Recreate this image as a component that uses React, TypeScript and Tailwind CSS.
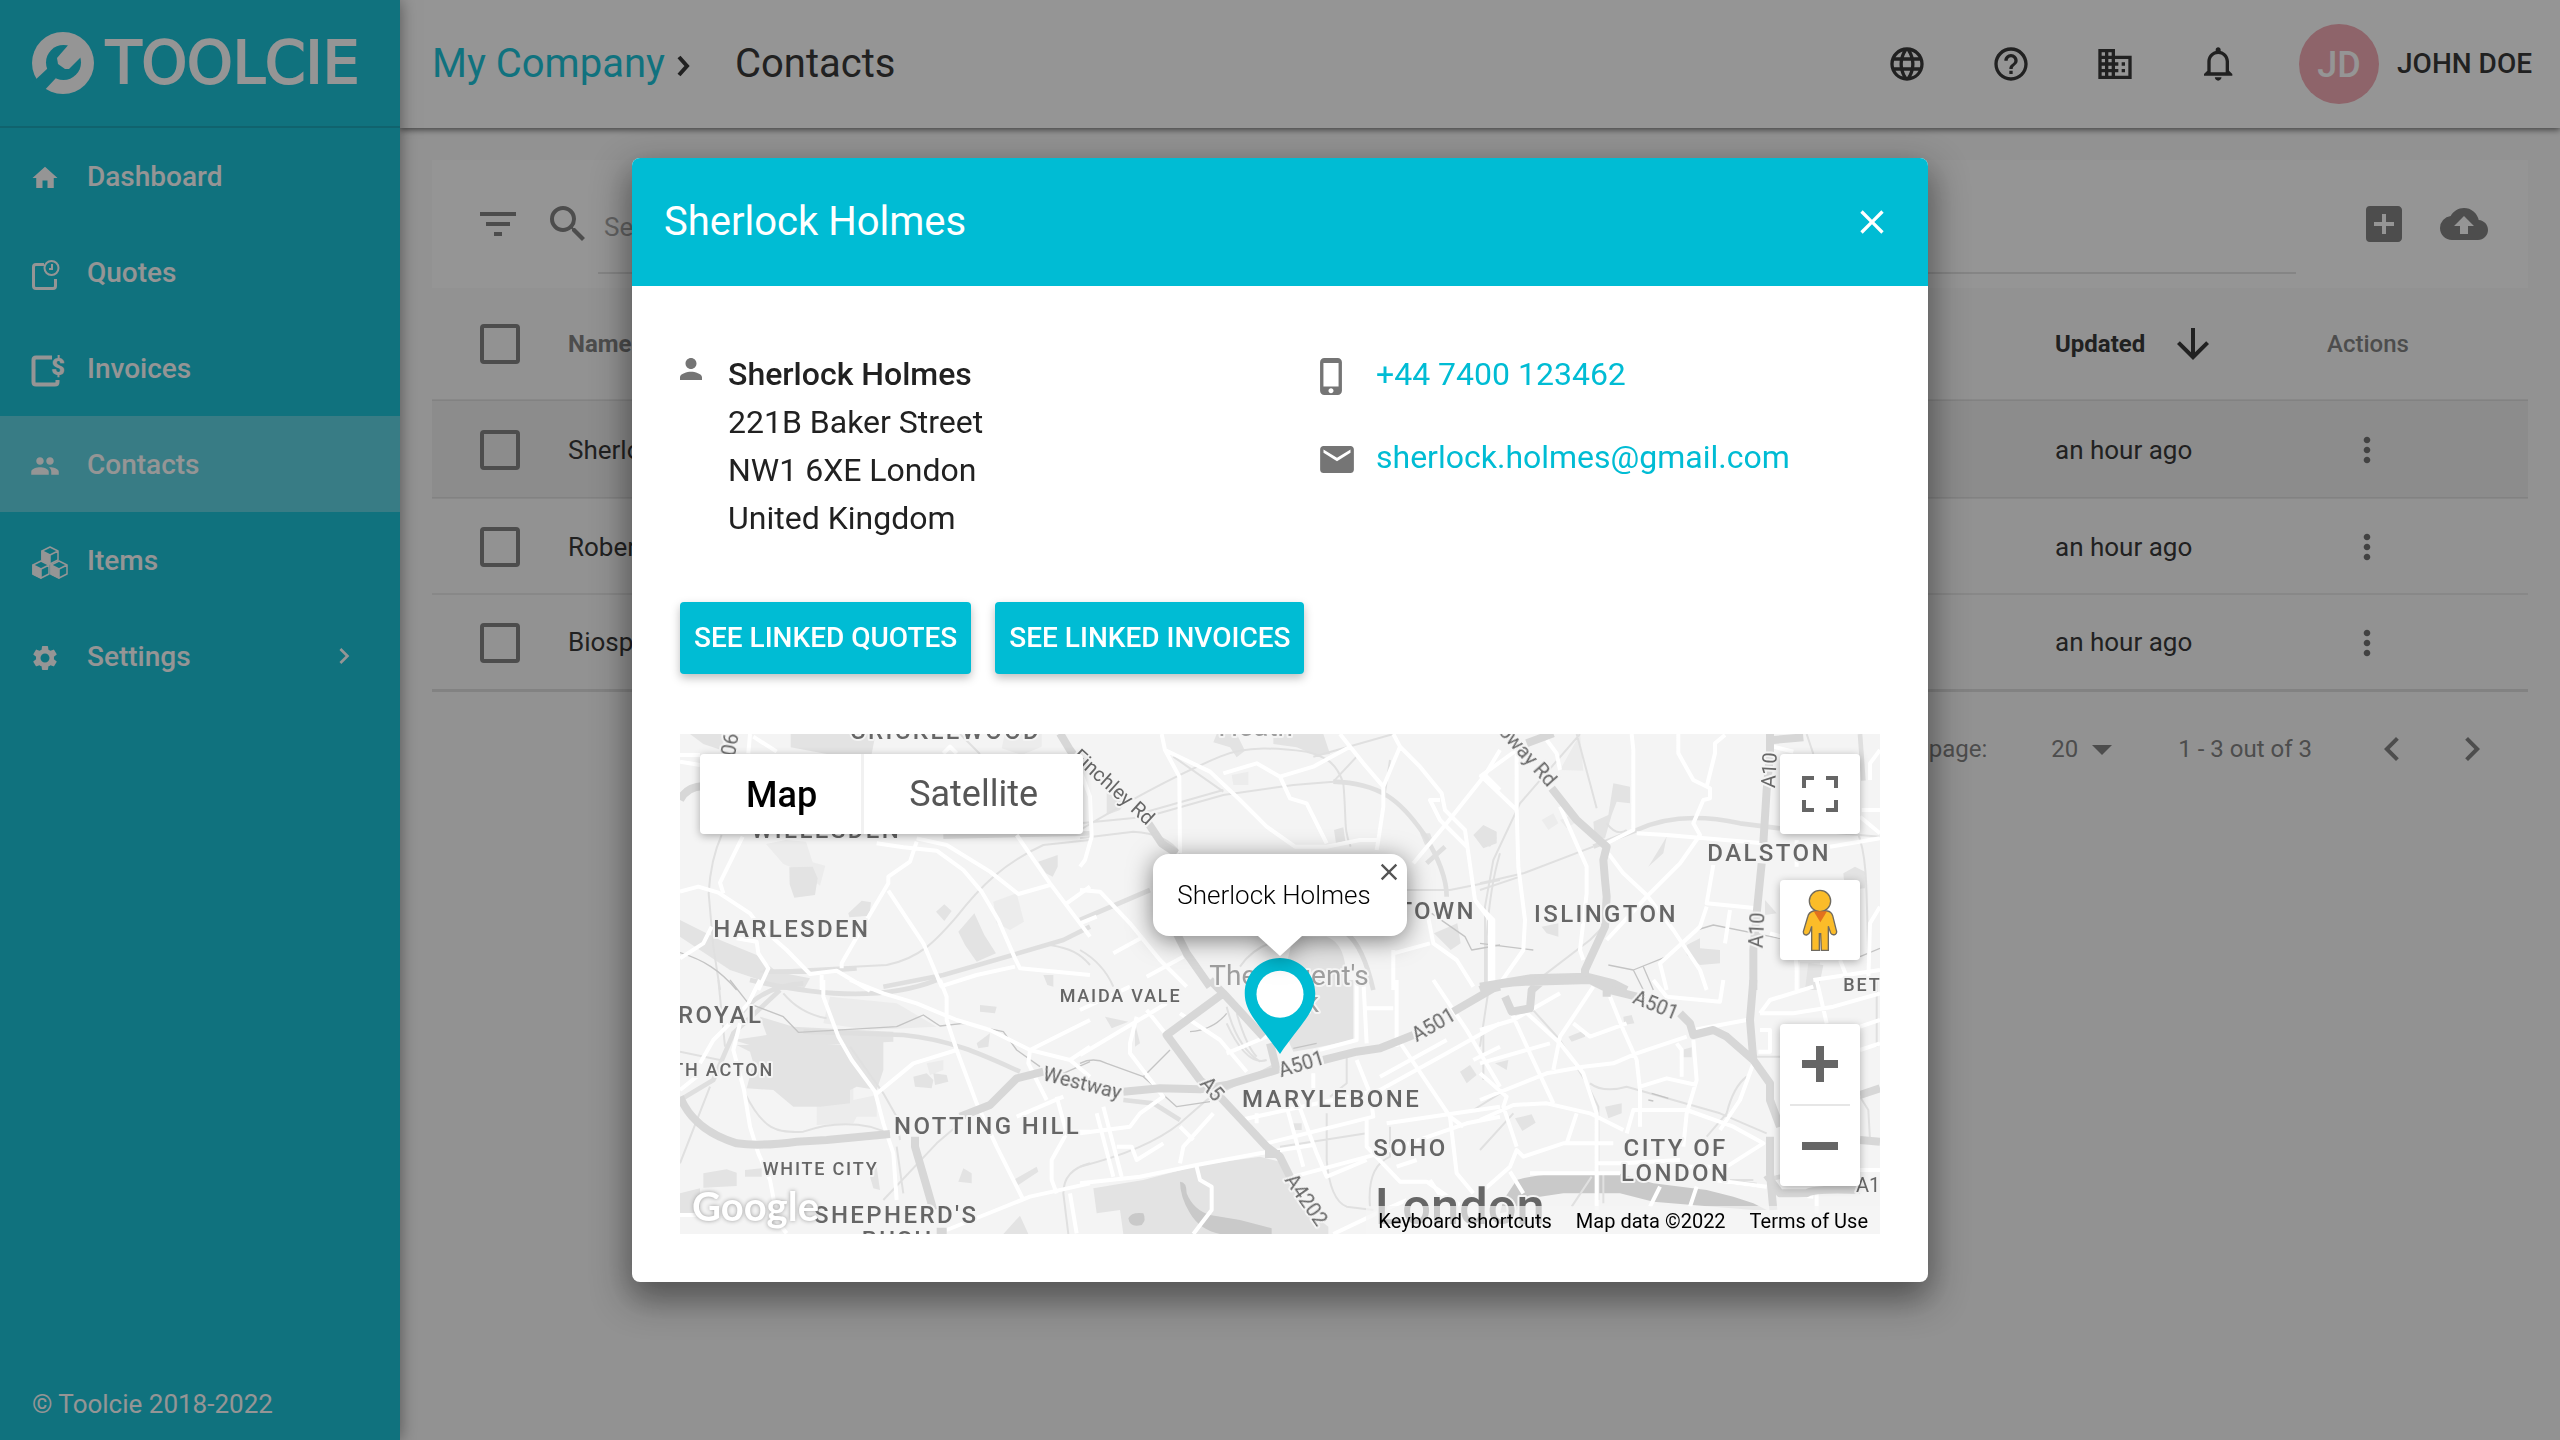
import type { ReactNode } from "react";
import {
  MdAddBox,
  MdArrowDownward,
  MdArrowDropDown,
  MdBackup,
  MdChevronLeft,
  MdChevronRight,
  MdClose,
  MdDomain,
  MdFilterList,
  MdHelpOutline,
  MdHome,
  MdLanguage,
  MdMoreVert,
  MdPeople,
  MdSearch,
  MdSettings,
} from "react-icons/md";

interface Contact {
  name: string;
  updated: string;
}

interface MapTile {
  x: number;
  y: number;
  light: string;
  park: string;
  water: string;
  rail: string;
  railWide: string;
  canal: string;
  highway: string;
  road: string;
}

interface MapLabel {
  text: string;
  x: number;
  y: number;
  kind: "district" | "area" | "road" | "park" | "city";
  rotate?: number;
  anchor?: "start" | "middle" | "end";
}

const contacts: Contact[] = [
  { name: "Sherlock Holmes", updated: "an hour ago" },
  { name: "Robert", updated: "an hour ago" },
  { name: "Biosphere", updated: "an hour ago" },
];

const tiles: MapTile[] = [
  {
    x: -30,
    y: -42,
    light:
      "M288 372l60-12 60 5 20 62 38 10-16 60-50-40-60-25z M970 545l70-25 22 85-42 25-40-20z M1005 40h110v40l-60 25-60-20z",
    park: "M362 40h255l-12 62H470l-108-20z M358 442l70-2 15 35-8 50-62 8-14-40z M865 635l48-55 30 65 35 55-58 25-35-50z M798 575l25-22 22 20-22 30z M535 580l40-38 28 5-5 40-60 5z M1105 425l58-20v35l-15 30-20-10z M1120 765h30v35l-18-5z M30 600l120 60 110 45 60 50 100 20-20 35H330l-60-30-90-30-150-100z M60 42h100v50l-60-20z",
    water: "",
    rail: "M155 345C130 400 120 450 116 520L130 680l20 130 M270 755l380-20C750 715 800 660 860 590C930 500 1000 430 1120 375L1260 360 M1140 675c60 10 90 25 120 60 M870 42l60 60",
    railWide:
      "M280 755L420 755L560 745 M640 800L820 765L1010 710L1180 660L1260 620 M820 350l440-10",
    canal: "M30 698C100 720 150 750 200 810",
    highway: "M30 240q20-40 70-42 M1170 40L1200 90L1230 130",
    road: "M30 515L85 500L145 518L240 580L270 620L350 690L420 762L500 752L600 812 M218 350L150 488L160 520 M30 715L100 670L125 620 M200 655L260 665L265 700L295 745L265 810 M515 745L515 730L590 600L655 490V470L720 425L740 365 M655 512L760 670L815 800 M620 370L700 382L800 392L880 450L935 515L985 600L1035 715L1050 745L1260 765 M810 800L920 765L1035 740 M740 355L830 375L960 455L1045 522L1140 495 M1040 345L1140 490L1260 650 M1190 550L1260 500 M240 42L235 100 M250 50L320 95 M820 100l20-20 20 20 M30 105L90 105 M455 765V810 M30 125l60 10",
  },
  {
    x: 1200,
    y: -42,
    light: "M455 165l50-10v40h-45z",
    park: "M410 42h60l25 50-25 20-20-30-50-15z M580 42h150l20 60-40 5-60-25-70-10z M762 330l28-8 6 42-28 5z M1180 345l30-30 40 20v35l-40 15z M80 220l60 20-20 30-40 15z M1020 340l30 0 10 25-25 10z M640 650h100c50 20 60 70 60 160H600z M1062 640l70-30 10 60-30 20z",
    water: "",
    rail: "M0 330C150 240 300 160 420 110C500 75 600 85 680 95C740 110 770 130 790 190C800 300 790 330 812 380 M0 310L200 290L430 225L640 195L760 185L830 110 M200 275L430 210 M0 355L160 335Q260 340 300 400 M700 110L940 42 M930 120l-40 260 M280 110L430 215 M980 510h130l150-30 M1260 400q-30 100-40 250v150 M0 690q70 40 100 110 M480 740Q520 680 600 660",
    railWide:
      "M760 185C900 190 960 240 1030 340C1080 420 1100 480 1100 530 M0 600L210 510 M1040 430L1095 380 M800 640Q850 680 880 810",
    canal: "M1055 580l100 70 20 40 85-15",
    highway: "M205 310L245 370L290 400 M285 630L320 700L390 800",
    road: "M245 42L255 90L390 155L480 240L560 320L645 380L740 380L840 360L895 360 M255 90L298 170L300 400 M430 160L530 130L600 170L700 140L810 80 M600 170L630 235L680 250L740 370 M780 42L850 130L910 200 M940 42L960 80L910 200V260L895 360L890 390 M960 80L1020 140L1085 220L1095 270L1155 330L1165 400L1185 540L1230 600V810 M1260 90L1215 165L1100 310L1000 430 M1215 165l45 45 M1080 240H1050L1080 300L1160 380 M0 150L30 230L35 350L15 420L0 440 M0 510L60 515L150 610L240 720L320 800 M0 610L50 590 M100 700L190 650 M200 770L310 710 M1040 570L1060 670L1130 720L1180 800 M940 700L1050 670 M940 690V810",
  },
  {
    x: 2400,
    y: -42,
    light:
      "M185 300l35-20 15 30-30 20z M240 300l35-15 15 20-30 20z M240 150L300 42l10 110z M960 725h60v80h-60z",
    park: "M400 190l50 10v50l-40-5-15 40-20 70-30 5-5-55 45-20z M0 330l40 0 10 25-20 25-30-10z M1090 460l35-20 30 15v50l-60 5z M620 675l40-20v30l60 5v40l-60 5-40-30z M185 620l50-10v40l-35-10z M855 540l35 40-35 5z M505 440l55-90-10 50z M985 730l45 5-15 75h-40z",
    water: "",
    rail: "M0 490L130 460L340 380 M0 510L120 470 M290 42L330 190L350 265 M300 42L120 250L40 420L15 560V800 M380 310q30 40 60 20 M980 42l20 60 M1130 330C1160 400 1160 470 1165 750 M160 790L330 660L390 600 M900 325L1200 350",
    railWide: "M340 380L470 330Q600 270 780 310L900 325 M1140 42l10 140",
    canal:
      "M0 670L160 690 M385 735L460 750L560 710L650 630L700 615L900 655 M1140 710l60-25 M460 750l30 60 M490 740l30 70",
    highway:
      "M215 205L290 300L380 380L370 420L375 480L380 530L375 620L315 750V770 M0 800L150 775L320 770L400 790L440 810 M870 42V100L860 210L850 370 M845 430L830 580L820 690V810 M880 60l90-8 M140 70l80-30",
    road: "M0 170L110 90 M0 165L110 270L115 440L135 600L130 690L60 790 M110 100V270 M200 60L230 100L240 150 M455 42L460 90V330L380 370 M470 340L560 345L850 370 M595 42V100L640 180L690 205V235L670 240L640 310L660 345L600 430L500 530L380 660 M735 45L705 70V100L680 200 M240 260L320 440V520L300 690L310 720 M385 400L430 460L500 525L580 630L660 750L680 810 M700 435L680 550L830 565 M680 560L660 620L540 730L560 810 M750 570L735 670 M1050 380L1200 355 M1145 270H1200 M1140 290l60 50 M1200 90l-30 40v50 M950 440V360 M1200 560L1170 610L1165 780 M870 640L940 660L950 740V810 M1080 720l20 50 M1000 780L1200 750 M0 560L40 600V790 M880 80l60 15",
  },
  {
    x: -30,
    y: 738,
    light:
      "M440 330l110-15v45l70-15v65H560l-10 20-110 5z M770 250l50-10v30l-40 15z M480 50l200 20 120 70-200 10-140-20z",
    park: "M200 195H520L640 165V270L620 330L560 320L540 330V370L450 380H370L310 330L230 325L250 250L240 215z M270 110l100 30 300 15v30l-400 20-80-25 100-15z M730 290l40-10 20 20-5 25-50-5z M790 280l40 5 5 20-40 10z M930 75l50 5-5 20-45-5z M920 190l40-30-5 40-30 5z M100 580l70-12 30 10v40l-100 5z M225 570l50-5v25h-50z M30 640l60-15v75H30z M865 605l15-40 25 15v30z M1030 600l70-40 5 15-60 40z M600 590l20-30 10 70-20-5z M1000 762l50-55 25 55z",
    water: "",
    rail: "M145 0L165 200 M340 40q50 60 130 75 M30 215L150 240 M30 550L120 320 M225 340C280 450 320 460 400 455Q500 420 600 440L660 460 M540 200L640 340L680 410L690 480 M640 660L800 490L870 430 M700 640L680 500 M1260 550Q1180 570 1180 640L1195 762",
    railWide:
      "M400 155L700 165C850 180 950 230 1050 275 M240 0C450 50 650 60 800 0 M200 120Q260 20 400 10 M30 360L130 300L190 160L330 30",
    canal:
      "M180 0L235 70L340 110L385 157L590 145L680 140L760 105L810 138L880 130L1000 155L1040 210L1110 260 M1180 280l80-35",
    highway:
      "M30 350Q70 450 200 490Q270 500 380 485L470 480L660 462 M870 410L960 375L1040 295L1120 275 M735 470V500L770 620L790 690 M800 755h30",
    road: "M270 0L235 70L200 110L130 180L90 250 M210 130L190 210L222 330L240 440L265 520L300 600L315 680 M30 330L80 290 M460 0V50L505 170L545 240L615 335L640 430L670 520L680 660 M540 0L640 40L740 70L860 120L960 150L1080 210L1200 240L1260 290 M810 0L830 50V120L860 210L920 370L980 500L1060 660 M615 345L730 250L860 210 M1080 210L1075 250L1130 360 M1180 350L1040 410 M1160 350L1190 460L1145 540V600L1160 640 M830 750L980 690L1080 650L1260 610 M1080 210L1180 160L1260 120 M1200 240l60-40 M300 700l50 60 M30 705H80 M1200 640l20 120 M1190 455h70",
  },
  {
    x: 1200,
    y: 738,
    light: "",
    park: "M700 0h120V180L700 205L640 215L620 170z M40 625L190 600L360 555L540 530L600 545L635 580L670 680L745 740V762H130L120 690L50 700z M1140 275l30-20 20 30-30 25z M640 430h25v20h-25z M75 110l70 15-50 20z M165 130v70l15-10z",
    water:
      "M300 605Q320 605 320 640Q340 690 390 705L480 720L575 745V762H420Q360 750 330 700Q300 650 300 605z M145 715q10-20 45-15q10 20-5 35q-35 10-40-20z",
    rail: "M0 560Q200 510 300 430L380 360L590 250 M740 400V540Q750 660 800 680L880 690 M600 500L860 460 M870 680Q860 560 930 530V440 M440 80Q470 200 540 245 M470 100Q500 200 530 230 M800 230v80L750 350 M1210 150v150 M440 130q60 130 120 110 M1260 340L1180 390",
    railWide: "M130 360L220 370L300 420",
    canal:
      "M0 250Q40 230 80 250L190 290L270 210 M190 290L290 380L390 365 M330 155Q400 150 440 100 M640 205l70-15",
    highway:
      "M430 40L260 165L360 300L420 350L560 500L600 530L630 590 M130 335L240 325L360 328L440 315L590 270L570 190 M390 0L430 40L550 170 M730 240L830 215L900 205L1000 165 M1120 95L1240 25L1260 20 M555 522h45",
    road: "M0 610L180 590L350 555L540 520L700 495 M0 460L150 440L180 400L250 350L150 220V190L170 110 M0 225L160 130L260 70 M200 90L360 290 M300 100L420 180L500 275 M440 220L560 170 M0 90L150 20 M830 0V180L700 215 M850 0L860 190 M950 0V200 M850 85H940 M1060 0L1160 150L1260 320 M955 180L1110 410L1150 440 M560 490L880 410L870 340L830 240 M480 420L900 330L1100 220L1260 130 M900 290L1100 180 M640 330L710 520L740 590L860 540 M620 380L670 560 M640 590L900 520L1160 430L1260 410 M530 430V400 M300 550L310 500L400 400 M300 440l40 40 M70 380L125 590 M50 400L100 590 M110 500H155L170 540L250 490 M860 420V500L960 605H1040L1160 690 M1110 410L1130 580L1180 640 M920 430L1260 380 M350 560L360 600L395 620V690L340 762 M1050 600l40 60 M980 660L890 700L760 762 M950 560l60-20 M700 280v60 M1180 240L1260 200",
  },
  {
    x: 2400,
    y: 738,
    light: "",
    park: "M105 415l50-12 12 25-40 25z M430 110l25-5 8 25-30 5z M605 210l30-8v30h-28z M375 380l50-10v30l-40 15z M265 170l50-20v20l-40 15z M45 250l40-10-5 30z",
    water:
      "M70 660L110 600Q160 585 220 582H420L520 610L680 630L760 650L820 670L860 690H820L700 680L520 665L420 640H250L150 655L110 690L60 700z",
    rail: "M0 200L30 0 M150 80L240 180L320 310L355 380V660 M330 310Q370 340 440 320L580 360L720 400L860 460 M800 290Q760 320 740 400L680 470 M0 510L100 400 M820 230H900 M1140 350L1165 390L1170 480 M1190 0V200 M370 580v90 M335 590l-60 90 M860 600l60-20 M750 600h70",
    railWide: "M860 600l40-10 M750 605l80 10",
    canal: "M515 340l50 15 M505 360l15 3",
    highway:
      "M0 30Q60 5 150 5L330 0L390 30L470 50 M75 50L95 95L150 85L155 30L190 0 M600 100L630 130L640 165L700 150L740 170L820 240L870 310V360L900 440 M820 0L810 120L820 240 M870 470V580L880 690 M860 585L900 640H980Q1000 625 1140 630 M1140 480L1200 485 M1140 345L1200 325 M380 30v20",
    road: "M0 150L100 120L240 40 M95 100L150 220L220 370 M130 90L240 190L310 280L350 400V690 M0 250L210 190 M0 360L200 280L310 260L400 250L470 220L620 170 M0 420L100 375L200 370L330 400L430 450 M0 280L80 350L70 380L110 500 M390 50L430 150L470 240L480 330V440 M440 460L460 390H620L760 440L850 490L740 560L600 560 M640 180L650 300L620 400L610 500 M590 190L605 210V290 M480 320L560 295L650 315 M820 250L780 360L720 450 M0 640L90 560L110 510L130 530L250 490H400 M90 575L130 640 M150 580H420 M350 550H430L600 540 M520 0L560 50L720 65L730 0 M640 150L800 120 M840 100L870 60L1000 20 M840 100H940L1060 80L1200 40 M1010 0L1040 130 M835 215H870V150H840 M1140 140L1200 120 M1140 210L1200 190 M540 620L510 680 M650 620L630 680 M700 600L860 620 M1010 640V700 M1120 570H1200 M220 270L240 170L340 20 M280 130L330 170L440 130 M260 490L290 400 M900 640l100 10",
  },
];

const labels: MapLabel[] = [
  { text: "CRICKLEWOOD", x: 510, y: 16, kind: "district" },
  { text: "WILLESDEN", x: 214, y: 313, kind: "district" },
  { text: "HARLESDEN", x: 100, y: 608, kind: "district" },
  { text: "PARK ROYAL", x: 250, y: 868, kind: "district", anchor: "end" },
  { text: "NORTH ACTON", x: 282, y: 1026, kind: "area", anchor: "end" },
  { text: "WHITE CITY", x: 248, y: 1323, kind: "area" },
  { text: "SHEPHERD'S", x: 402, y: 1468, kind: "district" },
  { text: "BUSH", x: 545, y: 1541, kind: "district" },
  { text: "NOTTING HILL", x: 642, y: 1201, kind: "district" },
  { text: "MAIDA VALE", x: 1139, y: 805, kind: "area" },
  { text: "CHALK FARM", x: 1725, y: 398, kind: "area" },
  { text: "CAMDEN TOWN", x: 2388, y: 555, kind: "district", anchor: "end" },
  { text: "ISLINGTON", x: 2562, y: 565, kind: "district" },
  { text: "DALSTON", x: 3082, y: 380, kind: "district" },
  { text: "BETHNAL", x: 3490, y: 770, kind: "area" },
  { text: "MARYLEBONE", x: 1686, y: 1120, kind: "district" },
  { text: "SOHO", x: 2080, y: 1265, kind: "district" },
  { text: "CITY OF", x: 2987, y: 1265, kind: "district", anchor: "middle" },
  { text: "LONDON", x: 2987, y: 1340, kind: "district", anchor: "middle" },
  { text: "London", x: 2085, y: 1471, kind: "city" },
  { text: "Heath", x: 1615, y: 6, kind: "park" },
  { text: "The Regent's", x: 1588, y: 753, kind: "park" },
  { text: "Park", x: 1917, y: 835, kind: "park", anchor: "end" },
  { text: "A406", x: 152, y: 140, kind: "road", rotate: -80 },
  { text: "Finchley Rd", x: 1174, y: 72, kind: "road", rotate: 42 },
  { text: "Holloway Rd", x: 2604, y: 162, kind: "road", rotate: 48, anchor: "end" },
  { text: "A10", x: 3285, y: 163, kind: "road", rotate: -87 },
  { text: "A10", x: 3248, y: 643, kind: "road", rotate: -87 },
  { text: "Westway", x: 1085, y: 1038, kind: "road", rotate: 14 },
  { text: "A5", x: 1557, y: 1050, kind: "road", rotate: 50 },
  { text: "A501", x: 1803, y: 1030, kind: "road", rotate: -17 },
  { text: "A501", x: 2210, y: 925, kind: "road", rotate: -30 },
  { text: "A501", x: 2855, y: 806, kind: "road", rotate: 22 },
  { text: "A4202", x: 1812, y: 1338, kind: "road", rotate: 55 },
  { text: "A1203", x: 3528, y: 1375, kind: "road" },
];

const labelStyles = {
  district: "fill-[#666] text-[72px] font-medium tracking-widest",
  area: "fill-[#666] text-[54px] font-medium tracking-widest",
  road: "fill-[#666] text-[60px]",
  park: "fill-[#9e9e9e] text-[84px]",
  city: "fill-[#666] text-[152px] font-medium",
};

function Logo() {
  return (
    <a href="#" className="flex h-32 items-center gap-3 border-b-2 border-black/15 pl-8 text-white">
      <svg className="size-[62px]" viewBox="0 0 62 62">
        <circle cx="31" cy="31" r="31" fill="#fff" />
        <circle cx="31.5" cy="30.5" r="17.5" fill="#00bcd4" />
        <path d="M16 36L-1 52L9 62L24 46z" fill="#00bcd4" />
        <path d="M38 11L25 26L26 32L33 37H37L50 24V10z" fill="#fff" />
      </svg>
      <span className="font-['DejaVu_Sans'] text-[58px] leading-none [-webkit-text-stroke:2px_white]">
        TOOLCIE
      </span>
    </a>
  );
}

function QuoteIcon() {
  return (
    <svg className="h-[34px] w-10" viewBox="0 0 40 34" fill="none" stroke="currentColor">
      <path
        d="M14 7.5H6Q3.5 7.5 3.5 10V29Q3.5 31.5 6 31.5H23Q25.500 31.5 25.500 29V22"
        strokeWidth="3"
      />
      <circle cx="21.500" cy="11" r="7" strokeWidth="2" />
      <path d="M22 7v5h-3" strokeWidth="2" />
    </svg>
  );
}

function InvoiceIcon() {
  return (
    <svg className="h-[34px] w-10" viewBox="0 0 40 34" fill="none" stroke="currentColor">
      <path
        d="M22 4.5H6Q3.5 4.5 3.5 7V29Q3.5 31.5 6 31.5H25Q27.500 31.5 27.500 29V27"
        strokeWidth="4"
      />
      <text x="21" y="22" fill="currentColor" stroke="none" className="text-[24px] font-black">
        $
      </text>
    </svg>
  );
}

function CubesIcon() {
  return (
    <svg className="h-[34px] w-10" viewBox="0 0 40 34" fill="none" stroke="currentColor">
      {["translate(11 1)", "translate(2 15)", "translate(20 15)"].map((place) => (
        <g key={place} transform={place} strokeWidth="1.500" strokeLinejoin="round">
          <path d="M1 5L9 1L17 5V14L9 18L1 14z M9 9L17 5" />
          <path d="M1 5L9 9V18L1 14z" fill="currentColor" />
        </g>
      ))}
    </svg>
  );
}

function BellIcon() {
  return (
    <svg className="size-10" viewBox="0 0 24 24" fill="currentColor">
      <path d="M11.5 22c1.1 0 2-.9 2-2h-4c0 1.100.9 2 2 2zm6.500-6v-5.500c0-3.070-2.130-5.640-5-6.320V3.500c0-.83-.67-1.500-1.500-1.500S10 2.670 10 3.500v.68c-2.870.68-5 3.250-5 6.320V16l-2 2v1h17v-1l-2-2zm-2 1H7v-6.500C7 8.010 9.010 6 11.500 6S16 8.010 16 10.500V17z" />
    </svg>
  );
}

interface NavItemProps {
  icon: ReactNode;
  label: string;
  active?: boolean;
  expandable?: boolean;
}

function NavItem({ icon, label, active, expandable }: NavItemProps) {
  return (
    <li>
      <a
        href="#"
        className={`flex h-24 items-center pr-10 pl-[30px] text-[28px] font-medium text-white ${
          active ? "bg-white/30" : ""
        }`}
      >
        <span className="w-[57px] pt-1">{icon}</span>
        <span className="grow pt-[2px]">{label}</span>
        {expandable && <MdChevronRight className="size-8" />}
      </a>
    </li>
  );
}

function Sidebar() {
  return (
    <aside className="z-20 flex w-[400px] shrink-0 flex-col bg-[#00bcd4] shadow-[0_0_16px_rgba(0,0,0,0.5)]">
      <Logo />
      <nav className="grow">
        <ul>
          <NavItem icon={<MdHome className="size-[30px]" />} label="Dashboard" />
          <NavItem icon={<QuoteIcon />} label="Quotes" />
          <NavItem icon={<InvoiceIcon />} label="Invoices" />
          <NavItem icon={<MdPeople className="size-[30px]" />} label="Contacts" active />
          <NavItem icon={<CubesIcon />} label="Items" />
          <NavItem icon={<MdSettings className="size-[30px]" />} label="Settings" expandable />
        </ul>
      </nav>
      <p className="px-8 pb-4 text-[26px] leading-10 text-white">© Toolcie 2018-2022</p>
    </aside>
  );
}

function Header() {
  return (
    <header className="z-10 flex h-32 items-center bg-white pr-7 pl-8 text-[#212121] shadow-[0_2px_6px_rgba(0,0,0,0.6)]">
      <div className="flex grow items-center text-[40px]">
        <a href="#" className="text-[#00bcd4]">
          My Company
        </a>
        <svg
          className="mt-1 size-9"
          viewBox="0 0 36 36"
          fill="none"
          stroke="currentColor"
          strokeWidth="4"
        >
          <path d="M14 9l8 9-8 9" />
        </svg>
        <h1 className="ml-[34px]">Contacts</h1>
      </div>
      <div className="flex items-center gap-16">
        <button type="button" aria-label="Language">
          <MdLanguage className="size-10" />
        </button>
        <button type="button" aria-label="Help">
          <MdHelpOutline className="size-10" />
        </button>
        <button type="button" aria-label="Company">
          <MdDomain className="size-10" />
        </button>
        <button type="button" aria-label="Notifications">
          <BellIcon />
        </button>
      </div>
      <button type="button" className="ml-15 flex items-center gap-[18px] text-[28px] font-medium">
        <span className="flex size-20 items-center justify-center rounded-full bg-[#f2a1ac] pt-[2px] text-[36px] text-white">
          JD
        </span>
        JOHN DOE
      </button>
    </header>
  );
}

function SearchBar() {
  return (
    <div className="flex h-32 items-center bg-white pr-10 pl-[42px] text-[#757575]">
      <button type="button" aria-label="Filter">
        <MdFilterList className="size-12" />
      </button>
      <label htmlFor="search" className="ml-[22px]">
        <MdSearch className="size-12" />
      </label>
      <input
        id="search"
        type="search"
        placeholder="Search"
        className="mr-16 ml-[6px] h-25 min-w-0 grow border-b-2 border-black/12 px-[6px] pt-2 text-[26px] placeholder-[#9e9e9e]"
      />
      <button type="button" aria-label="Add contact" className="mr-8">
        <MdAddBox className="size-12" />
      </button>
      <button type="button" aria-label="Import contacts">
        <MdBackup className="size-12" />
      </button>
    </div>
  );
}

function CheckBox({ label }: { label: string }) {
  return (
    <input
      type="checkbox"
      aria-label={label}
      className="block size-10 appearance-none rounded border-4 border-[#757575]"
    />
  );
}

function ContactTable() {
  return (
    <table className="w-full table-fixed border-b-3 border-black/12 text-left text-[26px] text-[#212121]">
      <colgroup>
        <col className="w-[136px]" />
        <col />
        <col className="w-[272px]" />
        <col className="w-[201px]" />
      </colgroup>
      <thead>
        <tr className="h-28 text-2xl font-bold text-[#757575]">
          <th className="pl-12">
            <CheckBox label="Select all" />
          </th>
          <th>Name</th>
          <th className="text-[#212121]">
            <span className="flex items-center gap-6">
              Updated
              <MdArrowDownward className="size-12" />
            </span>
          </th>
          <th className="font-medium">Actions</th>
        </tr>
      </thead>
      <tbody>
        {contacts.map((contact, i) => (
          <tr
            key={contact.name}
            className={`border-t-2 border-black/8 ${i === 0 ? "h-[98px] bg-[#eee]" : "h-24"}`}
          >
            <td className="pt-[2px] pl-12">
              <CheckBox label={`Select ${contact.name}`} />
            </td>
            <td className="pt-[2px]">{contact.name}</td>
            <td className="pt-[2px]">{contact.updated}</td>
            <td className="pt-[2px] pl-5">
              <button type="button" aria-label="Row actions" className="block text-[#616161]">
                <MdMoreVert className="size-10" />
              </button>
            </td>
          </tr>
        ))}
      </tbody>
    </table>
  );
}

function Pagination() {
  return (
    <div className="flex h-28 items-center justify-end pt-[2px] pr-8 text-2xl text-[#757575]">
      <label htmlFor="rows" className="mr-16">
        Rows per page:
      </label>
      <div className="mr-[52px] flex items-center">
        <select id="rows" className="-mr-12 appearance-none pr-12">
          <option>20</option>
        </select>
        <MdArrowDropDown className="pointer-events-none size-12" />
      </div>
      <span>1 - 3 out of 3</span>
      <button type="button" aria-label="Previous page" className="ml-14">
        <MdChevronLeft className="size-12" />
      </button>
      <button type="button" aria-label="Next page" className="ml-8">
        <MdChevronRight className="size-12" />
      </button>
    </div>
  );
}

/* Base map: one viewBox unit is a third of a pixel */
function MapCanvas() {
  const layer = (pick: (tile: MapTile) => string, className: string) => (
    <g className={className}>
      {tiles.map((tile) => (
        <path
          key={`${tile.x},${tile.y}`}
          d={pick(tile)}
          transform={`translate(${tile.x} ${tile.y})`}
        />
      ))}
    </g>
  );

  return (
    <svg
      className="block size-full bg-[#f4f4f4]"
      viewBox="0 0 3600 1500"
      preserveAspectRatio="xMidYMid slice"
      strokeLinejoin="round"
    >
      {layer((t) => t.light, "fill-[#ececec]")}
      {layer((t) => t.park, "fill-[#e3e3e3]")}
      {layer((t) => t.water, "fill-[#c9c9c9]")}
      {layer((t) => t.rail, "fill-none stroke-[#e0e0e0] stroke-6")}
      {layer((t) => t.railWide, "fill-none stroke-[#dfdfdf] stroke-14")}
      {layer((t) => t.canal, "fill-none stroke-[#c4c4c4] stroke-4")}
      {layer((t) => t.road, "fill-none stroke-white stroke-12")}
      {layer((t) => t.highway, "fill-none stroke-[#d7d7d7] stroke-24")}
      {labels.map((label) => (
        <text
          key={`${label.text}${label.x}`}
          textAnchor={label.anchor}
          transform={`translate(${label.x} ${label.y}) rotate(${label.rotate ?? 0})`}
          paintOrder="stroke"
          className={`stroke-[#f4f4f4] stroke-12 ${labelStyles[label.kind]}`}
        >
          {label.text}
        </text>
      ))}
    </svg>
  );
}

function Pegman() {
  return (
    <svg className="h-[62px] w-9" viewBox="0 0 108 186">
      <g fill="#fbbc29" stroke="#6f6a60" strokeWidth="4">
        <path d="M34 66Q20 70 17 84L4 128Q4 138 14 138Q22 136 24 128L29 112V184H52V134H56L58 184H79V112L86 132Q90 140 100 136Q106 132 103 124L92 80Q88 68 76 66z" />
        <circle cx="54" cy="36" r="32" />
      </g>
      <path d="M35 67H75L55 100z" fill="#e2711d" />
    </svg>
  );
}

function ContactMap() {
  return (
    <div className="relative mt-15 h-[500px] overflow-hidden">
      <MapCanvas />

      {/* Map type */}
      <div className="absolute top-5 left-5 flex h-20 rounded bg-white text-[36px] shadow-[0_2px_8px_rgba(0,0,0,0.3)]">
        <button
          type="button"
          className="border-r-3 border-[#f1f1f1] pt-[2px] pr-11 pl-[46px] font-medium text-black"
        >
          Map
        </button>
        <button type="button" className="px-[45px] text-[#565656]">
          Satellite
        </button>
      </div>

      {/* Controls */}
      <button
        type="button"
        aria-label="Full screen"
        className="absolute top-5 right-5 flex size-20 items-center justify-center rounded bg-white shadow-[0_2px_8px_rgba(0,0,0,0.3)]"
      >
        <svg className="size-9" viewBox="0 0 18 18" fill="#666">
          <path d="M0 0v6h2V2h4V0z M16 0h-4v2h4v4h2V0z M16 16h-4v2h6v-6h-2z M2 12H0v6h6v-2H2z" />
        </svg>
      </button>
      <div className="absolute right-5 bottom-12 flex flex-col gap-16">
        <button
          type="button"
          aria-label="Street view"
          className="flex size-20 items-center justify-center rounded bg-white shadow-[0_2px_8px_rgba(0,0,0,0.3)]"
        >
          <Pegman />
        </button>
        <div className="flex w-20 flex-col items-center rounded bg-white shadow-[0_2px_8px_rgba(0,0,0,0.3)]">
          <button type="button" aria-label="Zoom in" className="flex size-20 items-center justify-center">
            <svg className="size-9" viewBox="0 0 18 18" fill="#666">
              <path d="M18 7h-7V0H7v7H0v4h7v7h4v-7h7z" />
            </svg>
          </button>
          <div className="h-[2px] w-15 bg-[#e6e6e6]" />
          <button type="button" aria-label="Zoom out" className="flex size-20 items-center justify-center">
            <svg className="size-9" viewBox="0 0 18 18" fill="#666">
              <path d="M0 7h18v4H0z" />
            </svg>
          </button>
        </div>
      </div>

      {/* Marker and its label */}
      <div className="absolute inset-x-0 top-[120px] flex flex-col items-center">
        <div className="relative rounded-2xl bg-white px-6 py-5 text-[26px] leading-[42px] font-light text-black drop-shadow-[0_4px_12px_rgba(0,0,0,0.5)]">
          <span className="pr-3">Sherlock Holmes</span>
          <button type="button" aria-label="Close label" className="absolute top-1 right-1 text-[#555]">
            <MdClose className="size-7" />
          </button>
          <svg className="absolute top-full left-1/2 h-5 w-11 -translate-x-1/2" viewBox="0 0 44 20">
            <path d="M0 0h44L22 20z" fill="#fff" />
          </svg>
        </div>
        <svg className="mt-[22px] h-24 w-18" viewBox="0 0 72 98">
          <path
            d="M36 0C16 0 0 16 0 36C0 56 14 66 36 98C58 66 72 56 72 36C72 16 56 0 36 0z"
            fill="#00bcd4"
          />
          <circle cx="36" cy="37" r="24" fill="#fff" />
        </svg>
      </div>

      {/* Attribution */}
      <div className="absolute inset-x-0 bottom-0 flex items-end justify-between">
        <a
          href="#"
          className="pb-1 pl-3 font-[Lato] text-[40px] leading-12 font-bold text-white [text-shadow:0_0_4px_#999]"
        >
          Google
        </a>
        <div className="flex h-7 items-center gap-6 bg-[#f5f5f5]/70 px-3 pt-[2px] text-[20px] text-black">
          <button type="button">Keyboard shortcuts</button>
          <span>Map data ©2022</span>
          <a href="#">Terms of Use</a>
        </div>
      </div>
    </div>
  );
}

function ContactDialog() {
  return (
    <div className="fixed inset-0 z-30 flex items-center justify-center bg-[rgba(33,33,33,0.48)]">
      <div
        role="dialog"
        aria-labelledby="dialog-title"
        className="w-full max-w-[1296px] overflow-hidden rounded-lg bg-white shadow-[0_14px_36px_4px_rgba(0,0,0,0.45)]"
      >
        <div className="flex h-32 items-center justify-between bg-[#00bcd4] pr-9 pl-8 text-white">
          <h2 id="dialog-title" className="text-[40px]">
            Sherlock Holmes
          </h2>
          <button type="button" aria-label="Close">
            <MdClose className="size-10" />
          </button>
        </div>

        <div className="px-12 pt-16 pb-12 text-[32px] leading-12 text-[#212121]">
          <div className="grid grid-cols-[640px_1fr]">
            {/* Address */}
            <div className="flex">
              <svg className="mt-2 mr-[26px] size-[22px]" viewBox="4 4 16 16" fill="#757575">
                <path d="M12 12c2.210 0 4-1.790 4-4s-1.790-4-4-4-4 1.790-4 4 1.790 4 4 4zm0 2c-2.670 0-8 1.340-8 4v2h16v-2c0-2.660-5.330-4-8-4z" />
              </svg>
              <address className="not-italic">
                <p className="font-medium">Sherlock Holmes</p>
                <p>221B Baker Street</p>
                <p>NW1 6XE London</p>
                <p>United Kingdom</p>
              </address>
            </div>

            {/* Phone and mail */}
            <ul className="flex flex-col gap-[35px] text-[#00bcd4]">
              <li className="flex items-center">
                <span className="w-14 pt-1">
                  <svg className="h-[37px] w-[22px]" viewBox="5 1 13 22" fill="#757575">
                    <path d="M15.500 1h-8C6.120 1 5 2.120 5 3.500v17C5 21.880 6.120 23 7.500 23h8c1.380 0 2.500-1.120 2.500-2.500v-17C18 2.120 16.880 1 15.500 1zm-4 21c-.83 0-1.500-.67-1.500-1.500s.67-1.500 1.500-1.500 1.500.67 1.500 1.500-.67 1.500-1.500 1.500zm4.500-4H7V4h9v14z" />
                  </svg>
                </span>
                <a href="#">+44 7400 123462</a>
              </li>
              <li className="flex items-center">
                <span className="w-14 pt-1">
                  <svg className="h-[27px] w-[34px]" viewBox="2 4 20 16" fill="#757575">
                    <path d="M20 4H4c-1.100 0-1.990.9-1.990 2L2 18c0 1.100.9 2 2 2h16c1.100 0 2-.9 2-2V6c0-1.100-.9-2-2-2zm0 4l-8 5-8-5V6l8 5 8-5v2z" />
                  </svg>
                </span>
                <a href="#">sherlock.holmes@gmail.com</a>
              </li>
            </ul>
          </div>

          <div className="mt-15 flex gap-6 text-[28px] font-medium text-white">
            <button
              type="button"
              className="h-18 rounded bg-[#00bcd4] px-[14px] shadow-[0_4px_10px_rgba(0,0,0,0.26)]"
            >
              SEE LINKED QUOTES
            </button>
            <button
              type="button"
              className="h-18 rounded bg-[#00bcd4] px-[14px] shadow-[0_4px_10px_rgba(0,0,0,0.26)]"
            >
              SEE LINKED INVOICES
            </button>
          </div>

          <ContactMap />
        </div>
      </div>
    </div>
  );
}

export default function App() {
  return (
    <div className="flex min-h-screen bg-[#fafafa] font-[Roboto,sans-serif]">
      <Sidebar />
      <div className="flex min-w-0 grow flex-col">
        <Header />
        <main className="p-8">
          <SearchBar />
          <ContactTable />
          <Pagination />
        </main>
      </div>
      <ContactDialog />
    </div>
  );
}
